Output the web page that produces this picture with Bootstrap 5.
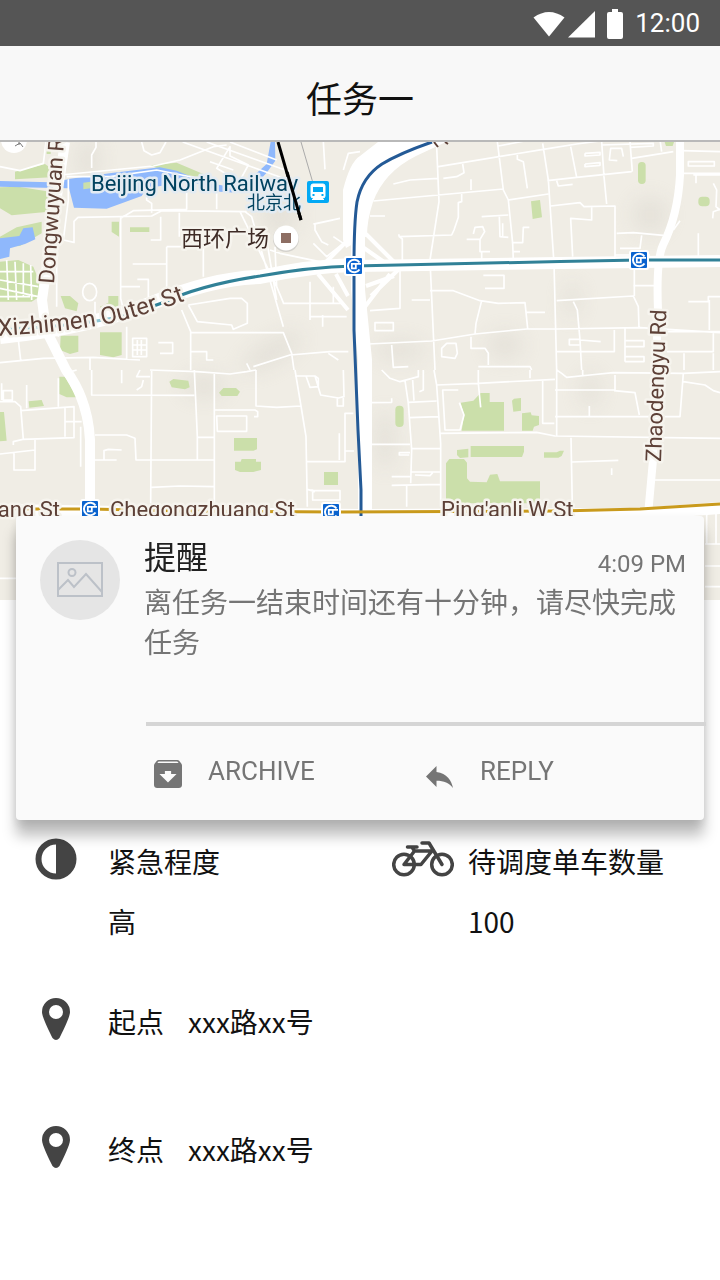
<!DOCTYPE html>
<html lang="zh-CN">
<head>
<meta charset="utf-8">
<meta name="viewport" content="width=device-width, initial-scale=1">
<title>任务一</title>
<link href="https://cdn.jsdelivr.net/npm/bootstrap@5.3.0/dist/css/bootstrap.min.css" rel="stylesheet">
<style>
  body { font-family: "Noto Sans CJK SC", sans-serif; font-size: 28px; line-height: 40px; color: #111; background: #fff; }
  .latin { font-family: Roboto, sans-serif; }
  .status-bar { background: #555; color: #fff; height: 46px; padding: 0 20px; font-size: 26px; }
  .status-bar svg { fill: #fff; }
  .title-bar { background: #f8f8f8; border-bottom: 2px solid #b9b9b9; height: 96px; }
  .title-bar h1 { font-size: 36px; line-height: 48px; font-weight: 400; padding-top: 8px; }
  .notice { margin: -84px 16px 18px; background: #fafafa; border: 0; border-radius: 4px; color: #757575;
            box-shadow: 0 16px 14px rgba(0,0,0,.25), 0 4px 10px rgba(0,0,0,.1); }
  .notice-main { padding: 24px 18px 61px 24px; gap: 24px; }
  .avatar { width: 80px; height: 80px; background: #e5e5e5; }
  .notice h2 { font-size: 32px; line-height: 30px; font-weight: 400; color: #212121; }
  .notice time { font-size: 24px; line-height: 34px; padding-top: 7px; }
  .notice hr { margin: 0 -2px 0 130px; border-top: 4px solid #d5d5d5; opacity: 1; }
  .actions { padding: 19px 6px 23px 138px; }
  .actions .btn { font-size: 26px; line-height: 40px; padding: 6px 0; border: 0; color: #757575; gap: 26px; }
  .actions svg { fill: #757575; margin-top: 6px; }
  .icon-cell { width: 108px; height: 42px; padding-left: 4px; }
  .icon-cell-wide { padding-right: 14px; }
  .field-text { padding-top: 3px; }
  .field-row { margin-bottom: 57px; }
  .field-row-place { margin-bottom: 85px; }
  .field-value { padding-top: 20px; }
  .map text { font-family: Roboto, "Noto Sans CJK SC", sans-serif; fill: #5d4037; stroke: #f6f4ee; stroke-width: 5px; stroke-linejoin: round; paint-order: stroke; }
  .map .station-name { fill: #01425f; stroke: #e3ebf2; }
  .map .place-name { fill: #3e2b26; }
  .park { fill: #cbdfaa; }
  .water { fill: #8fb8fc; }
  .lane { fill: none; stroke: #fff; stroke-width: 5; stroke-linejoin: round; }
  .road { fill: none; stroke: #fff; stroke-linejoin: round; }
  .rail { fill: none; stroke-linejoin: round; }
</style>
</head>
<body>

<div class="status-bar latin d-flex align-items-center justify-content-end">
  <svg width="90" height="32" viewBox="535 7 90 32" aria-hidden="true">
    <path d="M535.5 17.5Q551 6.500 566.500 17.500L551 36.500Z"/>
    <path d="M597 11V37.500H570Z"/>
    <path d="M614 9h6v3h3a2 2 0 0 1 2 2v23a2 2 0 0 1-2 2h-12a2 2 0 0 1-2-2V14a2 2 0 0 1 2-2h3z"/>
  </svg>
  <span class="ps-2 ms-1">12:00</span>
</div>

<header class="title-bar d-flex align-items-center justify-content-center">
  <h1 class="m-0">任务一</h1>
</header>

<svg class="map w-100 d-block" viewBox="0 142 720 458" role="img" aria-label="地图">
  <defs>
    <filter id="soft" x="-50%" y="-50%" width="200%" height="200%"><feGaussianBlur stdDeviation="10"/></filter>
    <g id="metro">
      <rect x="-9" y="-9" width="18" height="18" rx="2" fill="#0a63cf" stroke="#fff" stroke-width="2"/>
      <path d="M5.500 -3.500A6.300 6.300 0 1 0 5.500 3.500" fill="none" stroke="#fff" stroke-width="2"/>
      <path d="M7 -2.200H-2.200V2.400H1.800V-2" fill="none" stroke="#fff" stroke-width="1.800"/>
    </g>
  </defs>
  <rect y="142" width="720" height="458" fill="#f0ede5"/>
  <g fill="#d5d1c9" filter="url(#soft)" opacity=".4">
    <ellipse cx="88" cy="160" rx="12" ry="22"/>
    <ellipse cx="272" cy="352" rx="34" ry="12" transform="rotate(-30 272 352)"/>
    <ellipse cx="276" cy="350" rx="26" ry="10" transform="rotate(-30 276 350)"/>
    <ellipse cx="204" cy="386" rx="22" ry="12"/>
    <ellipse cx="280" cy="215" rx="18" ry="20"/>
    <ellipse cx="400" cy="350" rx="26" ry="10"/>
    <ellipse cx="505" cy="345" rx="18" ry="14"/>
    <ellipse cx="572" cy="300" rx="8" ry="18"/>
    <ellipse cx="650" cy="215" rx="18" ry="18"/>
    <ellipse cx="385" cy="440" rx="10" ry="30"/>
    <ellipse cx="590" cy="390" rx="10" ry="18"/>
  </g>

  <!-- north-west blocks -->
  <g transform="translate(0 140) scale(.33333)">
    <path class="park" d="M45 95L135 72 152 84V112L45 118ZM0 142L55 140 150 155 145 215 35 226 0 205ZM140 8h12v34h-12ZM450 76L530 68 610 102 600 112 490 92ZM335 245h22v45l-22-14ZM390 262h58v14h-58ZM0 290L50 262 125 245V280L60 318 0 320ZM182 468L210 468 235 490 230 514 195 505ZM325 468H355V505L310 515 300 500 325 488ZM182 587H235V635L210 642 180 630ZM300 577H365V645L340 652 300 645ZM0 365L55 360 100 380 120 430 118 470 95 485H0Z"/>
    <path class="water" d="M200 118L340 98 480 82 530 92 620 128 700 142 760 108 800 72 812 5H825L826 62 800 98 770 130 710 158 660 155 600 132 560 125 440 145 425 168 320 206 222 203ZM0 123L150 127 205 118V145L130 143 0 140ZM0 295L58 288 70 265 98 262 106 298 75 312 30 325 28 350 0 357Z"/>
    <path class="park" d="M250 128L272 125V145L250 148Z"/>
    <path class="lane" d="M0 80L60 92 130 70 138 6M275 84V45L288 22V6M425 6L432 32 455 45 480 38 498 6M150 108L460 78 540 60 640 20 680 15M200 110H330L470 90 560 108 650 130M548 6L850 115M620 6L870 95M690 6L830 60M690 20L650 85 718 125 745 75 690 48ZM630 65L700 90M222 310V244L234 232 455 228 485 212 740 215M455 218V190L440 180V150M170 150V500M205 118V180L190 300 222 307M362 232V475L378 540M362 235L400 212 560 208V150M650 130V208M482 230V300H452M538 218V290M500 320H610V410M398 372H500V455M500 320V372M412 418H445V475M362 440H420M720 215L830 440 825 320M735 215L755 230 850 560M800 300L830 480M810 330L840 340 1030 380M1000 240L945 252V270L965 305 985 315M940 252L1020 235M1000 290L1030 310 980 350 940 310M970 5L975 88M1030 90L1045 40 1080 35M285 540V485M565 495L690 475H725L742 490V550L700 568 695 555 592 545 565 495M545 510L572 575V690M572 578H850L875 640 882 690M848 490H1030M830 440L850 488M930 425V540M968 525V560M930 530H1040M1000 440V490M475 608H518V640H480M572 635H620V660H640M380 560V660M398 595H440V650H398ZM412 600V645M424 600V645M398 615H440M398 630H440M0 668L130 655 280 652 420 660M270 655V690M740 670L750 690M760 680L870 645 990 635H1045M985 640L1015 660M55 600L62 660M175 590V540M0 395H100M0 420L115 440M20 360L25 480M45 365L50 480M70 370V470M92 375L95 480M0 445L115 470M0 470H90"/>
    <ellipse class="lane" cx="269" cy="456" rx="21" ry="26"/>
  </g>

  <!-- north-east blocks -->
  <g transform="translate(360 140) scale(.33333)">
    <path class="park" d="M513 184L540 180 546 232 518 237ZM914 6H942L938 18H918Z"/>
    <rect class="park" x="834" y="66" width="23" height="66" rx="11"/>
    <rect class="park" x="1015" y="170" width="34" height="29" rx="12"/>
    <path class="lane" d="M415 18L510 0M230 20L237 185 210 360 225 690M235 80L550 28 650 12 780 -5M100 132L150 120 235 115M250 115L290 110 312 98 308 72M333 118V150M40 183L430 147M412 5L430 150 445 180 458 310 460 360M445 180L565 162M472 45V58L490 65 502 145M548 10L565 120 582 370 590 690M562 122L650 112 815 95M590 122L595 138 638 133M632 20L650 112M725 5L732 110 740 192M675 40L720 37V45L675 48V40M675 72L720 68V76L675 80V72M790 50L785 25 752 25 748 60 772 62M810 5L817 95M815 55L940 35M900 0L905 35M725 15L880 10V18L810 22M572 198L660 188 672 200 765 198V355M695 200V240L632 235 638 350M30 228H75M365 230L445 225M418 230L420 290 445 292M428 250V290M508 262H490L488 308H455M480 335H460M305 160V185L295 188V232L282 270 275 285 118 290 116 283M118 290L127 297V362M340 282L345 262 368 260 374 275 360 298H320M360 298V335H390M365 335V360M770 280L820 278 910 286M845 286L840 325 780 325M765 345H870M1015 280V355M940 270L960 242M962 100H1080M965 32L1080 35M985 65H1063V78H985ZM1008 100V130M1060 130L1070 150 1068 200 1080 210M1058 235L1060 215 1080 208M1000 105H1080M210 452H280L360 482 415 490 495 488 503 565M370 406H432V445H375M120 390V505L30 512M155 480H210M365 482L348 550 345 582M500 517H555M45 548H100V572H45ZM25 612L215 603 345 582 500 567H590L840 563 1080 578M590 482L820 468 835 500 837 565M823 370V468M820 437H885M640 485L652 510 660 600 665 690M660 600L722 605M660 598H628V615H658M590 635H763V570M795 565V665M795 602H852V620H795M795 650H852V665H795M985 485H1045V470H1080M1048 480V570M245 650V625L260 610H288L292 640 285 655ZM333 590V625H375L385 640V675M95 615L100 682 145 680M355 680H510L515 690M920 575H1080M920 635H1060V580M972 640V690M1060 640V690"/>
  </g>

  <!-- south-west blocks -->
  <g transform="translate(0 370) scale(.33333)">
    <path class="park" d="M178 20H195L230 82 200 82 178 72ZM86 94L125 90 132 108 88 113ZM0 126H12L20 212 0 214ZM972 306H1014V345H972ZM702 204H771V238L760 242H702ZM705 275H722L725 267H768V275H783V300L760 306H720L705 300Z"/>
    <path class="park" d="M508 35L520 27 565 32 569 52 555 58 515 52ZM657 68L670 54H708L720 65 712 78H665Z"/>
    <path class="lane" d="M275 0V75L583 76M365 0V40M455 0L452 400M420 0L410 20 450 20M430 30L425 50 410 60M583 0L592 200V268M450 0L590 5 690 12 740 5 768 0M643 10V400M643 120H765L773 125V140H762M650 138H740V184H652ZM768 0V108L830 112 903 108M885 0L903 108 918 200 922 410M885 18H945L962 75 1015 84 1032 80 1030 0M918 18L930 52 955 50V25L945 18M1012 84V108H1030V84M922 275H1035V130H1060M1035 243H1062M1018 190V270M643 270H408L405 205 380 195H285M285 270H350M312 270V242L325 238 365 240M592 202H643M455 352L540 348 643 350M925 360H938V390H1020V362H938M922 358L945 365M0 95H45L62 110 70 208M62 122L222 110V203L68 208 40 215V225M195 112V200M195 155H245M0 252L105 240V300H42V250M105 210V240M175 25V110M80 45V115M10 90V62H37V90ZM5 40V90M230 0L195 10M242 170V290M0 625H48"/>
  </g>

  <!-- south-east blocks -->
  <g transform="translate(360 370) scale(.33333)">
    <path class="park" d="M302 98L340 92 362 69H389V96H432V182H305L312 135ZM456 92L462 86 483 84V122L460 125ZM486 130L512 127 515 136 537 138V165L522 170 518 182H486ZM332 228H492V245L486 261H332ZM291 240L325 236V262L300 264 291 255ZM258 280L268 267H312L321 278V325L330 335 380 337 390 314 412 312 420 334H540V400H258ZM552 247H590L600 242H612L605 258 595 263H552Z"/>
    <rect class="park" x="106" y="107" width="25" height="64" rx="12"/>
    <path class="lane" d="M222 0L230 45 242 220V410M230 45L355 40 585 28M355 0V40L362 112M28 98L95 97V85M65 0L90 25 120 35 175 20V0M135 32L145 100 155 240 152 340M145 97L230 93M158 30L162 92M190 0V60L178 65M148 143L238 140M30 223H150M155 236H240M148 255H118V248H150M155 306H240M165 315L210 317 218 308M95 320H150M95 346L240 343M140 345V410M295 60H248L255 180H300L312 135 298 98M242 190L530 187 585 198 1080 205M590 198V0L605 10 620 22 690 15 760 8 970 10 1080 5M548 30V160H583M510 0V25M585 60H765V15M762 62L825 68 838 135M585 140H960L970 10M688 108V140M970 35L1035 45 1060 62 1080 68M633 203L637 410M637 276L775 271M885 330H1080M755 295V315M668 0V15M1040 430V520M1035 522H1080M1035 588H1080M1035 650H1080M1068 430V522"/>
  </g>

  <!-- main streets -->
  <path class="road" stroke-width="10" d="M65 142L52 230 42 300 46 330"/>
  <path class="road" stroke-width="14" d="M0 337Q90 328 152 303T260 277Q310 266 354 265"/>
  <path class="road" stroke-width="12" d="M354 266L560 263 720 261"/>
  <path class="road" stroke-width="10" d="M46 330L66 370Q88 400 90 440V510"/>
  <path d="M378 142H446L416 156Q384 172 373 202Q367 220 367 236L346 248L343 240V190Q350 162 360 156Z" fill="#fff"/>
  <path class="road" stroke-width="14" d="M358 225V290L365 360V515"/>
  <path class="road" stroke-width="4" d="M366 234L396 264M371 296L398 270M364 308L390 274M350 238L326 262M348 310L318 274M348 296L336 274M366 286L394 276M364 248L384 262"/>
  <path class="road" stroke-width="8" d="M680 142V175Q678 215 663 245Q656 260 658 310L653 460 648 515"/>
  <path class="road" stroke-width="12" d="M0 510L180 513 360 515 640 514 720 508"/>
  <ellipse cx="354" cy="265" rx="14" ry="9" fill="#fff"/>

  <!-- railways -->
  <path class="rail" stroke="#aaa" stroke-width="1" d="M301 142L315 190"/>
  <path class="rail" stroke="#000" stroke-width="3" d="M278 142L289 180 301 220"/>
  <path class="rail" stroke="#8fc5d3" stroke-width="3" d="M0 330Q80 326 128 315"/>
  <path class="rail" stroke="#318197" stroke-width="3" d="M128 315Q148 308 162 303Q200 285 260 276Q310 267 354 266L560 261.500 640 260H720"/>
  <path class="rail" stroke="#245a96" stroke-width="3" d="M432 142Q400 153 382 164Q362 177 357 202Q354 222 354 266V330L358 430 361 490V518"/>
  <path class="rail" stroke="#c99a1c" stroke-width="3" d="M0 509L90 509 180 511 340 512 560 511 640 509 720 504"/>

  <!-- places -->
  <circle cx="14" cy="140" r="13" fill="#fff"/>
  <path d="M15 146l5-3 3 4M19 145v-3" stroke="#777" fill="none"/>
  <circle cx="286" cy="239" r="13" fill="#aaa" opacity=".4"/>
  <circle cx="286" cy="238" r="12.500" fill="#fff"/>
  <rect x="281" y="233" width="10" height="10" fill="#8d6e63"/>
  <rect x="307" y="181" width="22" height="22" rx="2" fill="#03a9f4"/>
  <path d="M313 184h10q2 0 2 2v10q0 2-2 2h-10q-2 0-2-2v-10q0-2 2-2zM312 200l2-2h8l2 2" fill="#fff" stroke="#fff"/>
  <path d="M313 187h10v5h-10zM312.500 194h2v2h-2zM321.500 194h2v2h-2z" fill="#03a9f4"/>
  <use href="#metro" x="354" y="266"/>
  <use href="#metro" x="639" y="260"/>
  <use href="#metro" x="90" y="509"/>
  <use href="#metro" x="331" y="512"/>

  <text class="station-name" x="91" y="191" font-size="22">Beijing North Railway</text>
  <text class="station-name" x="247" y="209" font-size="18">北京北</text>
  <text class="place-name" x="181" y="246" font-size="22">西环广场</text>
  <path class="rail" stroke="#000" stroke-width="3" d="M287 172L301 220"/>
  <text font-size="22" transform="translate(54 284) rotate(-86)">Dongwuyuan Rd</text>
  <path id="xizhimen" d="M-2 336Q80 331 120 321T210 291" fill="none"/>
  <text font-size="24"><textPath href="#xizhimen">Xizhimen Outer St</textPath></text>
  <text font-size="22" transform="translate(661 462) rotate(-88)">Zhaodengyu Rd</text>
  <text x="60" y="517" font-size="22" text-anchor="end">Chegongzhuang St</text>
  <text x="110" y="517" font-size="22">Chegongzhuang St</text>
  <text x="441" y="517" font-size="22">Ping'anli W St</text>
  <path d="M434 142l4 5M445 142l3 2" stroke="#5d4037" stroke-width="2"/>
</svg>

<main>
  <section class="notice card position-relative">
    <div class="notice-main d-flex">
      <div class="avatar rounded-circle flex-shrink-0 d-flex align-items-center justify-content-center">
        <svg width="46" height="36" viewBox="0 0 46 36" fill="none" stroke="#bcc1c8" stroke-width="2" aria-hidden="true">
          <path d="M1 1H45V34H1ZM1 28L11 18 17 25 29 12 45 30"/><circle cx="15" cy="10.500" r="3.500"/>
        </svg>
      </div>
      <div class="flex-grow-1">
        <div class="d-flex justify-content-between">
          <h2 class="m-0">提醒</h2>
          <time class="latin" datetime="16:09">4:09 PM</time>
        </div>
        <p class="m-0">离任务一结束时间还有十分钟，请尽快完成任务</p>
      </div>
    </div>
    <hr>
    <div class="actions d-flex">
      <div class="w-50">
        <button type="button" class="btn latin d-flex align-items-center">
          <svg width="28" height="28" viewBox="3 3 18 18" aria-hidden="true"><path d="M20.540 5.230l-1.390-1.680C18.880 3.210 18.470 3 18 3H6c-.47 0-.88.21-1.160.55L3.460 5.230C3.170 5.570 3 6.020 3 6.500V19c0 1.100.9 2 2 2h14c1.100 0 2-.9 2-2V6.500c0-.48-.17-.93-.46-1.270zM12 17.500L6.500 12H10v-2h4v2h3.500L12 17.500zM5.120 5l.81-1h12l.94 1H5.120z"/></svg>
          ARCHIVE
        </button>
      </div>
      <div class="w-50">
        <button type="button" class="btn latin d-flex align-items-center">
          <svg width="28" height="28" viewBox="0 -6 28 28" aria-hidden="true"><path d="M10.500 6V0L0 10.500 10.500 21V14.700C18 14.700 23.200 17 27 22C25.500 14.500 21 7.500 10.500 6Z"/></svg>
          REPLY
        </button>
      </div>
    </div>
  </section>

  <div class="row g-0 field-row">
    <div class="col-6 d-flex">
      <div class="icon-cell d-flex align-items-center justify-content-center">
        <svg width="42" height="42" viewBox="0 0 42 42" aria-hidden="true"><circle cx="21" cy="21" r="17.500" fill="#fff" stroke="#444" stroke-width="6"/><path d="M21 3a18 18 0 0 1 0 36z" fill="#444"/></svg>
      </div>
      <div class="field-text"><div>紧急程度</div><div class="field-value">高</div></div>
    </div>
    <div class="col-6 d-flex">
      <div class="icon-cell icon-cell-wide d-flex align-items-center justify-content-end">
        <svg width="62" height="36" viewBox="0 0 62 36" fill="none" stroke="#444" stroke-width="3.500" stroke-linejoin="round" stroke-linecap="round" aria-hidden="true">
          <circle cx="12" cy="23.500" r="10.300"/><circle cx="50" cy="23.500" r="10.300"/>
          <path d="M12 23.500L22.500 10H40L29 23.500ZM22.500 10L20 6M15.500 6H25M30 2H37L50 23.500"/>
        </svg>
      </div>
      <div class="field-text"><div>待调度单车数量</div><div class="field-value">100</div></div>
    </div>
  </div>

  <div class="d-flex field-row-place">
    <div class="icon-cell d-flex align-items-center justify-content-center">
      <svg width="28" height="42" viewBox="0 0 28 42" fill="#444" aria-hidden="true"><path fill-rule="evenodd" d="M14 0A14 14 0 0 1 28 14C28 19 21 33 17.500 40Q14 44 10.500 40C7 33 0 19 0 14A14 14 0 0 1 14 0ZM14 7A7 7 0 1 0 14 21 7 7 0 0 0 14 7Z"/></svg>
    </div>
    <div class="field-text d-flex gap-4"><span>起点</span><span>xxx路xx号</span></div>
  </div>

  <div class="d-flex field-row-place">
    <div class="icon-cell d-flex align-items-center justify-content-center">
      <svg width="28" height="42" viewBox="0 0 28 42" fill="#444" aria-hidden="true"><path fill-rule="evenodd" d="M14 0A14 14 0 0 1 28 14C28 19 21 33 17.500 40Q14 44 10.500 40C7 33 0 19 0 14A14 14 0 0 1 14 0ZM14 7A7 7 0 1 0 14 21 7 7 0 0 0 14 7Z"/></svg>
    </div>
    <div class="field-text d-flex gap-4"><span>终点</span><span>xxx路xx号</span></div>
  </div>
</main>

<script src="https://cdn.jsdelivr.net/npm/bootstrap@5.3.0/dist/js/bootstrap.bundle.min.js"></script>
</body>
</html>
